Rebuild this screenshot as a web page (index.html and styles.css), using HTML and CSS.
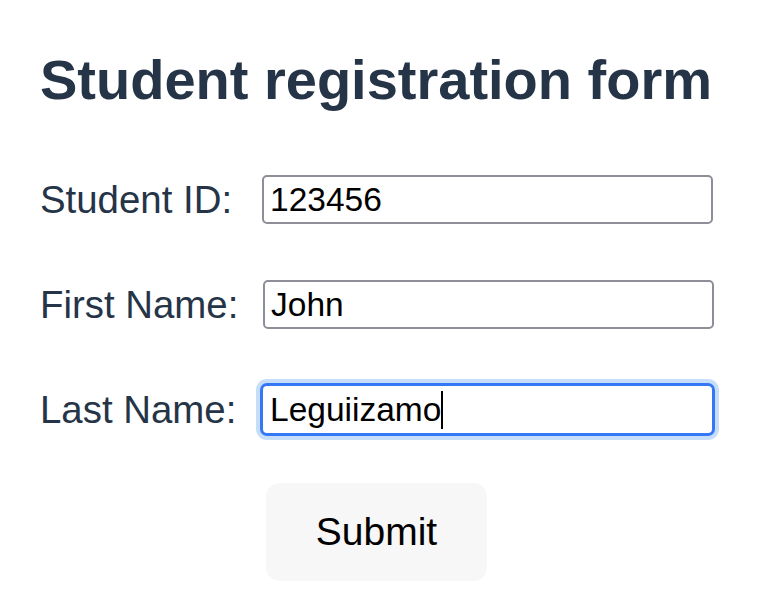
FILE: index.html
```html
<!DOCTYPE html>
<html lang="en">
<head>
<meta charset="utf-8">
<title>Student registration form</title>
<link rel="stylesheet" href="styles.css">
</head>
<body>
<main class="page">
  <h1 class="title">Student registration form</h1>
  <form class="form">
    <div class="row">
      <label class="label" for="sid">Student ID:</label>
      <input class="field" id="sid" type="text" value="123456">
    </div>
    <div class="row row-shift">
      <label class="label" for="fname">First Name:</label>
      <input class="field" id="fname" type="text" value="John">
    </div>
    <div class="row">
      <label class="label" for="lname">Last Name:</label>
      <span class="field-wrap">
        <input class="field field-focused" id="lname" type="text" value="Leguiizamo">
        <span class="caret"></span>
      </span>
    </div>
    <div class="actions">
      <button class="submit" type="button">Submit</button>
    </div>
  </form>
</main>
</body>
</html>
```
FILE: styles.css
```css
html, body {
  margin: 0;
  padding: 0;
  background: #ffffff;
}

.page {
  padding: 48px 0 0 40px;
  font-family: "Liberation Sans", Arial, sans-serif;
  color: #253447;
}

.title {
  margin: 0;
  font-size: 56px;
  line-height: 64px;
  font-weight: 700;
  color: #253447;
}

.form {
  display: flex;
  flex-direction: column;
  gap: 52px;
  margin-top: 61px;
}

.row {
  display: flex;
  align-items: center;
  height: 53px;
}

.label {
  flex: none;
  width: 222px;
  font-size: 38.4px;
  line-height: 44px;
  color: #253447;
  white-space: nowrap;
}

.row-shift .label {
  width: 223px;
}

.field {
  box-sizing: border-box;
  width: 451px;
  height: 49px;
  border: 2px solid #8e8e98;
  border-radius: 5px;
  padding: 0 6px;
  margin: 0;
  font-family: "Liberation Sans", Arial, sans-serif;
  font-size: 33.5px;
  color: #000000;
  background: #ffffff;
  outline: none;
}

.field-wrap {
  position: relative;
  display: inline-flex;
  margin-left: -2px;
}

.field-focused {
  width: 455px;
  height: 53px;
  border: 3px solid #3478f6;
  border-radius: 7px;
  padding: 0 7px;
  box-shadow: 0 0 0 4px #c7defb;
}

.caret {
  position: absolute;
  left: 181px;
  top: 8px;
  width: 2px;
  height: 38px;
  background: #000000;
}

.actions {
  display: flex;
  padding-left: 226px;
  margin-top: -5px;
}

.submit {
  width: 221px;
  height: 98px;
  border: none;
  border-radius: 14px;
  background: #f7f7f7;
  font-family: "Liberation Sans", Arial, sans-serif;
  font-size: 39px;
  color: #000000;
  padding: 0;
}
```
